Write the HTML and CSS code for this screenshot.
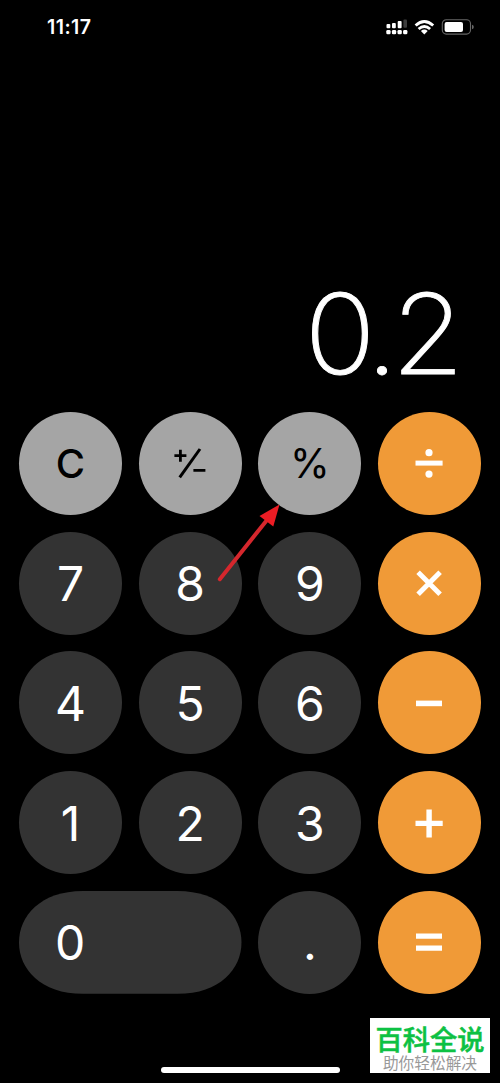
FILE: index.html
```html
<!DOCTYPE html>
<html lang="zh-CN">
<head>
<meta charset="utf-8">
<title>Calculator</title>
<link rel="stylesheet" href="styles.css">
</head>
<body>
<main class="phone">
  <header class="status">
    <span class="time">11:17</span>
    <svg class="indicators" width="90" height="18" viewBox="0 0 90 18">
      <g fill="#fff">
        <rect x="1.5" y="6" width="3.8" height="4.2" rx="1"/>
        <rect x="7" y="5" width="3.8" height="5.2" rx="1"/>
        <rect x="12.7" y="3" width="3.9" height="7.2" rx="1"/>
        <rect x="18.4" y="1.5" width="3.6" height="8.3" rx="1" fill="#3c3c3c"/>
        <rect x="1.3" y="12" width="4.3" height="4.2" rx="1.3"/>
        <rect x="6.9" y="12" width="4.3" height="4.2" rx="1.3"/>
        <rect x="12.5" y="12" width="4.3" height="4.2" rx="1.3"/>
        <rect x="18.1" y="12" width="4.3" height="4.2" rx="1.3"/>
        <path d="M35.9 13Q39.3 10.2 42.7 13L39.3 16.4Z"/>
        <rect x="59.6" y="4" width="18.4" height="9.9" rx="2"/>
      </g>
      <g fill="none" stroke="#fff" stroke-width="2.9">
        <path d="M30.6 7.5Q39.3-.4 48.2 7.5"/>
        <path d="M33.6 11Q39.3 6 45.1 11"/>
      </g>
      <rect x="57.3" y="1.8" width="28.2" height="14.3" rx="4" fill="none" stroke="#666" stroke-width="1.1"/>
      <path d="M87 6.7q1.8.5 1.8 2.3t-1.8 2.3z" fill="#666"/>
    </svg>
  </header>
  <output class="display">0.2</output>
  <section class="keypad">
    <button class="key light">C</button>
    <button class="key light sign"><svg width="40" height="40" viewBox="0 0 40 40" fill="none" stroke="#000"><path d="M4.4 12.7H16.4M10.4 6.7V18.7M23.4 27.4H35.4" stroke-width="2.8"/><path d="M9.7 34.4L30 6" stroke-width="3"/></svg></button>
    <button class="key light percent">%</button>
    <button class="key op"><svg width="40" height="40" viewBox="0 0 40 40"><path d="M6.5 20.1H33.6" stroke="#fff" stroke-width="5"/><circle cx="20" cy="9.7" r="3.6" fill="#fff"/><circle cx="20" cy="31.1" r="3.6" fill="#fff"/></svg></button>
    <button class="key">7</button>
    <button class="key">8</button>
    <button class="key">9</button>
    <button class="key op"><svg width="40" height="40" viewBox="0 0 40 40"><path d="M9.1 9.2L31.1 31.2M31.1 9.2L9.1 31.2" stroke="#fff" stroke-width="5"/></svg></button>
    <button class="key">4</button>
    <button class="key">5</button>
    <button class="key">6</button>
    <button class="key op"><svg width="40" height="40" viewBox="0 0 40 40"><path d="M7 20.4H33" stroke="#fff" stroke-width="5.6"/></svg></button>
    <button class="key">1</button>
    <button class="key">2</button>
    <button class="key">3</button>
    <button class="key op"><svg width="40" height="40" viewBox="0 0 40 40"><path d="M6.5 20.4H33.7M20.1 6.5V34.4" stroke="#fff" stroke-width="5.4"/></svg></button>
    <button class="key zero"><svg class="pill" viewBox="0 0 222.5 102.8" preserveAspectRatio="none"><path d="M64 0H158.5C201 0 222.5 25 222.5 51.4S201 102.8 158.5 102.8H64C21.5 102.8 0 77.8 0 51.4S21.5 0 64 0Z"/></svg><span class="zero-label">0</span></button>
    <button class="key">.</button>
    <button class="key op"><svg width="40" height="40" viewBox="0 0 40 40"><path d="M7 14.2H33M7 26.2H33" stroke="#fff" stroke-width="5.2"/></svg></button>
  </section>
  <svg class="arrow" width="66" height="82" viewBox="0 0 66 82">
    <path d="M4.8 77.2L52 18" stroke="#d5272d" stroke-width="4" stroke-linecap="round"/>
    <path d="M64.5 2.5L58.3 24.5L44.5 14Z" fill="#ec1c24"/>
  </svg>
  <div class="home-bar"></div>
  <aside class="badge">
    <strong class="badge-title">百科全说</strong>
    <span class="badge-sub">助你轻松解决</span>
  </aside>
</main>
</body>
</html>
```
FILE: styles.css
```css
* { box-sizing: border-box; }

body {
  margin: 0;
  background: #000;
}

.phone {
  position: relative;
  display: flex;
  flex-direction: column;
  width: 500px;
  height: 1083px;
  overflow: hidden;
  background: #000;
  color: #fff;
  font-family: Inter, "Liberation Sans", sans-serif;
}

.status {
  display: flex;
  justify-content: space-between;
  align-items: center;
  height: 54px;
  padding: 0 25px 0 47px;
}

.time {
  font-size: 19.5px;
  font-weight: 600;
  letter-spacing: 0.45px;
}

.display {
  display: flex;
  justify-content: flex-end;
  align-items: flex-end;
  height: 335px;
  padding-right: 43px;
  font-size: 111px;
  font-weight: 200;
  letter-spacing: -6.5px;
  line-height: 110px;
  transform: scaleX(1.06);
  transform-origin: 454px 0;
  -webkit-text-stroke: 0.9px #fff;
}

.keypad {
  display: grid;
  grid-template-columns: repeat(4, 102.8px);
  grid-auto-rows: 102.8px;
  gap: 16.9px;
  margin: 23.1px 0 0 19.1px;
}

.key {
  display: flex;
  justify-content: center;
  align-items: center;
  padding: 2px 0 0;
  border: 0;
  border-radius: 50%;
  background: #333;
  color: #fff;
  font-family: inherit;
  font-size: 48px;
  font-weight: 400;
  line-height: 1;
}

.light {
  background: #a5a5a5;
  color: #000;
  font-size: 40px;
  font-weight: 450;
}

.percent { font-size: 40.5px; font-weight: 400; }

.sign { padding: 0 1px 0 0; }

.op {
  padding: 0 2px 0 0;
  background: #f09a37;
}

.zero {
  position: relative;
  grid-column: span 2;
  justify-content: flex-start;
  padding-left: 36px;
  border-radius: 0;
  background: none;
}

.pill {
  position: absolute;
  inset: 0;
  width: 100%;
  height: 100%;
  fill: #333;
}

.zero-label { position: relative; }

.arrow {
  position: absolute;
  left: 215px;
  top: 502px;
}

.home-bar {
  width: 179px;
  height: 6px;
  margin: auto auto 10px;
  border-radius: 3px;
  background: #fff;
}

.badge {
  position: absolute;
  left: 370px;
  top: 1018px;
  display: flex;
  flex-direction: column;
  align-items: center;
  width: 120px;
  height: 55px;
  padding-top: 5px;
  background: #fff;
  font-family: "Noto Sans CJK SC", sans-serif;
  white-space: nowrap;
}

.badge-title {
  color: #0dc143;
  font-size: 27.3px;
  font-weight: 500;
  line-height: 30px;
  -webkit-text-stroke: 0.5px #0dc143;
}

.badge-sub {
  color: #999;
  font-size: 15.7px;
  line-height: 19px;
}
```
